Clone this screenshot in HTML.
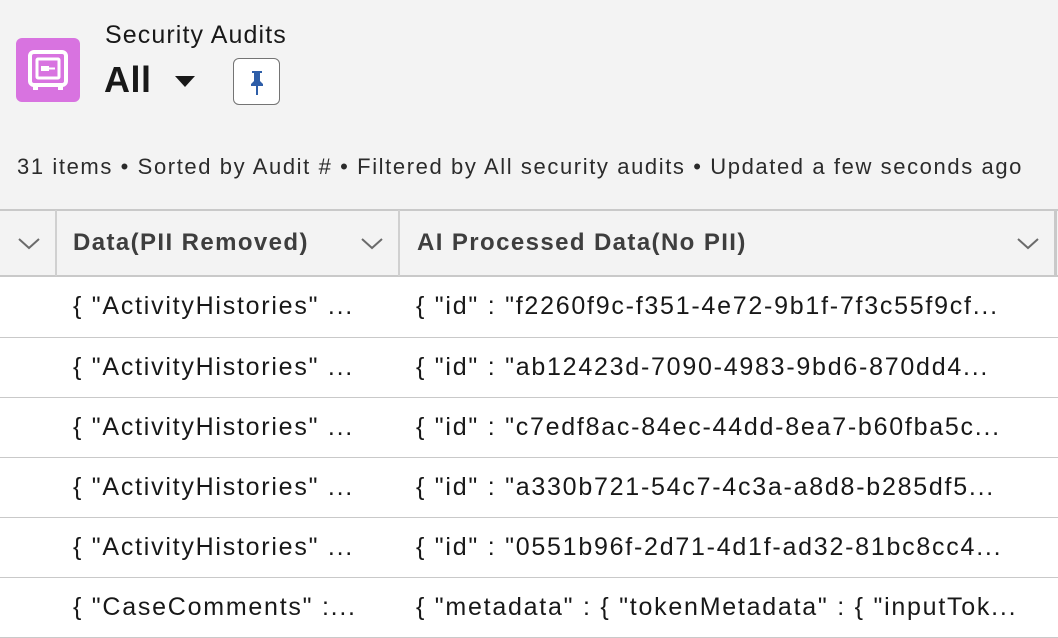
<!DOCTYPE html>
<html><head><style>
body{margin:0;width:1058px;height:636px;background:#f3f3f3;font-family:"Liberation Sans",sans-serif;overflow:hidden;position:relative;color:#181818}
.abs{position:absolute}
.row{position:absolute;left:0;width:1058px;height:60px;box-sizing:border-box;background:#fff;border-bottom:1.5px solid #c9c9c9;font-size:25px;color:#181818;letter-spacing:1.75px}
.row span{position:absolute;top:15px}
</style></head><body>
<div class="abs" style="left:16px;top:38px;width:64px;height:64px;background:#d873e0;border-radius:6px"></div>
<svg class="abs" style="left:16px;top:38px" width="64" height="64" viewBox="0 0 64 64">
<rect x="14" y="14" width="36" height="33" rx="4" fill="none" stroke="#fff" stroke-width="4"/>
<rect x="21" y="21" width="22" height="19" rx="1" fill="none" stroke="#fff" stroke-width="3"/>
<rect x="25" y="28" width="8" height="5" fill="#fff"/><rect x="33" y="29.5" width="6" height="2" fill="#fff"/>
<rect x="17" y="47" width="5" height="5" fill="#fff"/><rect x="42" y="47" width="5" height="5" fill="#fff"/>
</svg>
<div class="abs" style="left:105px;top:21px;font-size:25px;letter-spacing:1.1px">Security Audits</div>
<div class="abs" style="left:104px;top:59px;font-size:36px;font-weight:bold;letter-spacing:0.5px">All</div>
<div class="abs" style="left:175px;top:76px;width:0;height:0;border-left:10px solid transparent;border-right:10px solid transparent;border-top:11px solid #181818"></div>
<div class="abs" style="left:233px;top:58px;width:45px;height:45px;border:1.5px solid #747474;border-radius:6px;background:#fff"></div>
<svg class="abs" style="left:233px;top:58px" width="48" height="48" viewBox="0 0 48 48">
<path d="M19 13h10v2h-2v8l3 3v2h-12v-2l3-3v-8h-2z" fill="#2e5ea8"/><rect x="23" y="28" width="2" height="9" fill="#2e5ea8"/>
</svg>
<div class="abs" style="left:17px;top:154px;font-size:22px;color:#2b2b2b;letter-spacing:1.6px;white-space:nowrap">31 items • Sorted by Audit # • Filtered by All security audits • Updated a few seconds ago</div>
<div class="abs" style="left:0;top:209px;width:1058px;height:64px;background:#f3f3f3;border-top:2px solid #c9c9c9;border-bottom:2px solid #c9c9c9"></div>
<div class="abs" style="left:55px;top:210px;width:2px;height:66px;background:#d0d0d0"></div>
<div class="abs" style="left:398px;top:210px;width:2px;height:66px;background:#d0d0d0"></div>
<div class="abs" style="left:1054px;top:210px;width:3px;height:66px;background:#c9c9c9"></div>
<svg class="abs" style="left:17px;top:236px" width="24" height="16"><path d="M2 3l10 9 10-9" fill="none" stroke="#6b6b6b" stroke-width="2"/></svg>
<svg class="abs" style="left:360px;top:236px" width="24" height="16"><path d="M2 3l10 9 10-9" fill="none" stroke="#6b6b6b" stroke-width="2"/></svg>
<svg class="abs" style="left:1016px;top:236px" width="24" height="16"><path d="M2 3l10 9 10-9" fill="none" stroke="#6b6b6b" stroke-width="2"/></svg>
<div class="abs" style="left:73px;top:229px;font-size:24px;font-weight:bold;color:#3e3e3e;letter-spacing:1.4px">Data(PII Removed)</div>
<div class="abs" style="left:417px;top:229px;font-size:24px;font-weight:bold;color:#3e3e3e;letter-spacing:1.4px">AI Processed Data(No PII)</div>
<div class="row" style="top:277px;height:61px"><span style="left:73px">{ "ActivityHistories" ...</span><span style="left:416px">{ "id" : "f2260f9c-f351-4e72-9b1f-7f3c55f9cf...</span></div>
<div class="row" style="top:338px"><span style="left:73px">{ "ActivityHistories" ...</span><span style="left:416px">{ "id" : "ab12423d-7090-4983-9bd6-870dd4...</span></div>
<div class="row" style="top:398px"><span style="left:73px">{ "ActivityHistories" ...</span><span style="left:416px">{ "id" : "c7edf8ac-84ec-44dd-8ea7-b60fba5c...</span></div>
<div class="row" style="top:458px"><span style="left:73px">{ "ActivityHistories" ...</span><span style="left:416px">{ "id" : "a330b721-54c7-4c3a-a8d8-b285df5...</span></div>
<div class="row" style="top:518px"><span style="left:73px">{ "ActivityHistories" ...</span><span style="left:416px">{ "id" : "0551b96f-2d71-4d1f-ad32-81bc8cc4...</span></div>
<div class="row" style="top:578px"><span style="left:73px">{ "CaseComments" :...</span><span style="left:416px">{ "metadata" : { "tokenMetadata" : { "inputTok...</span></div>
</body></html>
